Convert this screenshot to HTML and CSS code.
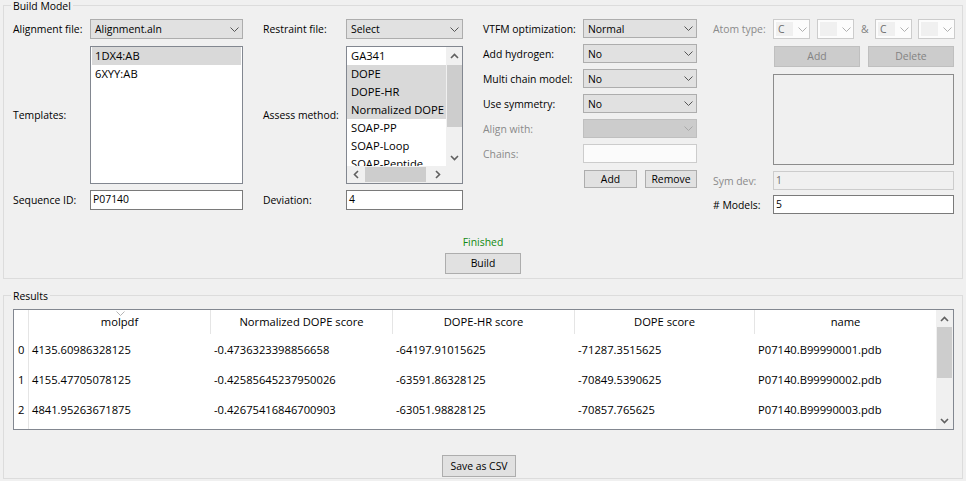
FILE: index.html
```html
<!DOCTYPE html>
<html>
<head>
<meta charset="utf-8">
<link rel="stylesheet" href="styles.css">
</head>
<body>
<div class="group build">
  <div class="gtitle">Build Model</div>
  <div class="cols">
    <div class="col c1">
      <div class="row">
        <span class="lbl">Alignment file:</span>
        <div class="combo field"><span class="ctext">Alignment.aln</span><svg class="chev" width="9" height="5" viewBox="0 0 9 5"><path d="M0.5 0.5 L4.5 4.5 L8.5 0.5"/></svg></div>
      </div>
      <div class="row mt7">
        <span class="lbl">Templates:</span>
        <div class="list tpl field">
          <div class="item sel">1DX4:AB</div>
          <div class="item">6XYY:AB</div>
        </div>
      </div>
      <div class="row mt6">
        <span class="lbl">Sequence ID:</span>
        <div class="input field">P07140</div>
      </div>
    </div>

    <div class="col c2">
      <div class="row">
        <span class="lbl">Restraint file:</span>
        <div class="combo field"><span class="ctext">Select</span><svg class="chev" width="9" height="5" viewBox="0 0 9 5"><path d="M0.5 0.5 L4.5 4.5 L8.5 0.5"/></svg></div>
      </div>
      <div class="row mt7">
        <span class="lbl">Assess method:</span>
        <div class="list assess field">
          <div class="items">
            <div class="item">GA341</div>
            <div class="item sel">DOPE</div>
            <div class="item sel">DOPE-HR</div>
            <div class="item sel">Normalized DOPE</div>
            <div class="item">SOAP-PP</div>
            <div class="item">SOAP-Loop</div>
            <div class="item">SOAP-Peptide</div>
          </div>
          <div class="vscroll">
            <div class="sbtn"><svg width="9" height="6" viewBox="0 0 9 6"><path d="M1 5 L4.5 1.5 L8 5"/></svg></div>
            <div class="vthumb athumb"></div>
            <div class="sfill"></div>
            <div class="sbtn"><svg width="9" height="6" viewBox="0 0 9 6"><path d="M1 1 L4.5 4.5 L8 1"/></svg></div>
          </div>
          <div class="hscroll">
            <div class="sbtn"><svg width="6" height="9" viewBox="0 0 6 9"><path d="M5 1 L1.5 4.5 L5 8"/></svg></div>
            <div class="hthumb"></div>
            <div class="sfill"></div>
            <div class="sbtn"><svg width="6" height="9" viewBox="0 0 6 9"><path d="M1 1 L4.5 4.5 L1 8"/></svg></div>
          </div>
          <div class="corner"></div>
        </div>
      </div>
      <div class="row mt6">
        <span class="lbl">Deviation:</span>
        <div class="input field">4</div>
      </div>
    </div>

    <div class="col c3">
      <div class="row r19">
        <span class="lbl">VTFM optimization:</span>
        <div class="combo field"><span class="ctext">Normal</span><svg class="chev" width="9" height="5" viewBox="0 0 9 5"><path d="M0.5 0.5 L4.5 4.5 L8.5 0.5"/></svg></div>
      </div>
      <div class="row r19 mt6">
        <span class="lbl">Add hydrogen:</span>
        <div class="combo field"><span class="ctext">No</span><svg class="chev" width="9" height="5" viewBox="0 0 9 5"><path d="M0.5 0.5 L4.5 4.5 L8.5 0.5"/></svg></div>
      </div>
      <div class="row r19 mt6">
        <span class="lbl">Multi chain model:</span>
        <div class="combo field"><span class="ctext">No</span><svg class="chev" width="9" height="5" viewBox="0 0 9 5"><path d="M0.5 0.5 L4.5 4.5 L8.5 0.5"/></svg></div>
      </div>
      <div class="row r19 mt6">
        <span class="lbl">Use symmetry:</span>
        <div class="combo field"><span class="ctext">No</span><svg class="chev" width="9" height="5" viewBox="0 0 9 5"><path d="M0.5 0.5 L4.5 4.5 L8.5 0.5"/></svg></div>
      </div>
      <div class="row r19 mt6">
        <span class="lbl dis">Align with:</span>
        <div class="combo combo-dis field"><span class="ctext"></span><svg class="chev" width="9" height="5" viewBox="0 0 9 5"><path d="M0.5 0.5 L4.5 4.5 L8.5 0.5"/></svg></div>
      </div>
      <div class="row r19 mt6">
        <span class="lbl dis">Chains:</span>
        <div class="input input-dis chains field"></div>
      </div>
      <div class="row mt7">
        <span class="lbl"></span>
        <div class="field btns3">
          <button class="btn b-add">Add</button>
          <button class="btn b-remove">Remove</button>
        </div>
      </div>
    </div>

    <div class="col c4">
      <div class="row">
        <span class="lbl dis">Atom type:</span>
        <div class="field atoms">
          <div class="acombo"><span class="abox">C</span><svg class="chev" width="9" height="5" viewBox="0 0 9 5"><path d="M0.5 0.5 L4.5 4.5 L8.5 0.5"/></svg></div>
          <div class="acombo"><span class="abox"></span><svg class="chev" width="9" height="5" viewBox="0 0 9 5"><path d="M0.5 0.5 L4.5 4.5 L8.5 0.5"/></svg></div>
          <span class="amp">&amp;</span>
          <div class="acombo"><span class="abox">C</span><svg class="chev" width="9" height="5" viewBox="0 0 9 5"><path d="M0.5 0.5 L4.5 4.5 L8.5 0.5"/></svg></div>
          <div class="acombo"><span class="abox"></span><svg class="chev" width="9" height="5" viewBox="0 0 9 5"><path d="M0.5 0.5 L4.5 4.5 L8.5 0.5"/></svg></div>
        </div>
      </div>
      <div class="row mt7">
        <span class="lbl"></span>
        <div class="field btns4">
          <button class="btn btn-dis b-add4">Add</button>
          <button class="btn btn-dis b-del4">Delete</button>
        </div>
      </div>
      <div class="row mt7">
        <span class="lbl"></span>
        <div class="field dbox"></div>
      </div>
      <div class="row mt6">
        <span class="lbl dis">Sym dev:</span>
        <div class="input input-dis symdev field r19">1</div>
      </div>
      <div class="row mt5">
        <span class="lbl">#&nbsp;Models:</span>
        <div class="input field r19 models">5</div>
      </div>
    </div>
  </div>
  <div class="status">Finished</div>
  <div class="btnrow"><button class="btn b-build">Build</button></div>
</div>

<div class="group results">
  <div class="gtitle">Results</div>
  <div class="table">
    <div class="tview">
      <div class="trow thead">
        <div class="vh"></div>
        <div class="th sorted">molpdf<svg class="sort" width="9" height="5" viewBox="0 0 9 5"><path d="M0.5 0.5 L4.5 4.5 L8.5 0.5"/></svg></div>
        <div class="th">Normalized DOPE score</div>
        <div class="th">DOPE-HR score</div>
        <div class="th">DOPE score</div>
        <div class="th">name</div>
      </div>
      <div class="trow">
        <div class="vh">0</div>
        <div class="td">4135.60986328125</div>
        <div class="td">-0.4736323398856658</div>
        <div class="td">-64197.91015625</div>
        <div class="td">-71287.3515625</div>
        <div class="td">P07140.B99990001.pdb</div>
      </div>
      <div class="trow">
        <div class="vh">1</div>
        <div class="td">4155.47705078125</div>
        <div class="td">-0.42585645237950026</div>
        <div class="td">-63591.86328125</div>
        <div class="td">-70849.5390625</div>
        <div class="td">P07140.B99990002.pdb</div>
      </div>
      <div class="trow">
        <div class="vh">2</div>
        <div class="td">4841.95263671875</div>
        <div class="td">-0.42675416846700903</div>
        <div class="td">-63051.98828125</div>
        <div class="td">-70857.765625</div>
        <div class="td">P07140.B99990003.pdb</div>
      </div>
    </div>
    <div class="vscroll tscroll">
      <div class="sbtn"><svg width="9" height="6" viewBox="0 0 9 6"><path d="M1 5 L4.5 1.5 L8 5"/></svg></div>
      <div class="vthumb tthumb"></div>
      <div class="sfill"></div>
      <div class="sbtn"><svg width="9" height="6" viewBox="0 0 9 6"><path d="M1 1 L4.5 4.5 L8 1"/></svg></div>
    </div>
  </div>
  <div class="saverow"><button class="btn b-save">Save as CSV</button></div>
</div>
</body>
</html>
```

FILE: styles.css
```css
* { box-sizing: border-box; }

body {
  margin: 0;
  width: 966px;
  height: 481px;
  overflow: hidden;
  background: #f0f0f0;
  font-family: "Open Sans", "Noto Sans", sans-serif;
  font-size: 10.4px;
  color: #000;
}

/* group boxes */
.group {
  border: 1px solid #dcdcdc;
  margin: 5px 3px 0 3px;
}
.gtitle {
  display: table;
  margin: -6px 0 0 7px;
  padding: 0 2px;
  line-height: 12px;
  background: #f0f0f0;
}
.build { padding-bottom: 4px; }
.results { margin-top: 16px; padding-bottom: 1px; }

/* columns */
.cols {
  display: flex;
  margin: 7px 0 0 9px;
}
.col { display: flex; flex-direction: column; }
.c1 { width: 230px; margin-right: 20px; }
.c2 { width: 200px; margin-right: 20px; }
.c3 { width: 214px; margin-right: 16px; }
.c4 { width: 241px; }
.c1 .lbl { width: 77px; }
.c2 .lbl { width: 83px; }
.c3 .lbl { width: 100px; }
.c4 .lbl { width: 60px; }

.row { display: flex; align-items: center; }
.mt5 { margin-top: 5px; }
.mt6 { margin-top: 6px; }
.mt7 { margin-top: 7px; }
.lbl { flex: none; white-space: nowrap; }
.lbl.dis { color: #8a8a8a; }
.field { flex: 1; min-width: 0; }

/* combo boxes */
.combo {
  display: flex;
  align-items: center;
  height: 20px;
  border: 1px solid #adadad;
  background: #e1e1e1;
  padding: 0 3px 0 4px;
}
.r19 .combo, .r19.input, .r19 .input { height: 19px; }
.ctext { flex: 1; line-height: 16px; white-space: nowrap; }
.chev { flex: none; display: block; }
.chev path { fill: none; stroke: #555; stroke-width: 1; }
.combo-dis { background: #cccccc; border-color: #bfbfbf; }
.combo-dis .chev path { stroke: #a8a8a8; }

/* inputs */
.input {
  height: 20px;
  border: 1px solid #7a7a7a;
  background: #fff;
  padding-left: 2px;
  line-height: 17px;
}
.input-dis { border-color: #cccccc; background: #f0f0f0; color: #6d6d6d; }
.chains { background: #fbfbfb; }
.models { line-height: 17px; }

/* lists */
.list {
  height: 138px;
  border: 1px solid #828790;
  background: #fff;
  font-size: 11.2px;
  overflow: hidden;
}
.item {
  height: 18px;
  line-height: 18px;
  white-space: nowrap;
  padding-left: 4px;
}
.item.sel { background: #d9d9d9; }
.tpl { padding: 0 1px; }
.tpl .item { padding-left: 3px; }

.assess {
  display: grid;
  grid-template-columns: 99px 17px;
  grid-template-rows: 119px 17px;
}
.items { overflow: hidden; }

/* scrollbars */
.vscroll {
  display: flex;
  flex-direction: column;
  background: #f0f0f0;
}
.hscroll {
  display: flex;
  background: #f0f0f0;
}
.corner { background: #f0f0f0; }
.sbtn {
  flex: none;
  width: 17px;
  height: 17px;
  display: flex;
  align-items: center;
  justify-content: center;
}
.sbtn path { fill: none; stroke: #606060; stroke-width: 1.6; }
.sfill { flex: 1; }
.vthumb { flex: none; background: #cdcdcd; margin: 0 1px; }
.athumb { margin-top: 1px; height: 62px; }
.hthumb { flex: none; background: #cdcdcd; margin: 1px 0 1px 1px; width: 61px; }

/* buttons */
.btn {
  font: inherit;
  color: #000;
  border: 1px solid #adadad;
  background: #e1e1e1;
  padding: 0;
  height: 21px;
  line-height: 17px;
}
.btn-dis { background: #cccccc; border-color: #bfbfbf; color: #838383; }
.btns3 { display: flex; gap: 8px; padding-left: 1px; }
.b-add { width: 53px; height: 18px; line-height: 14px; }
.b-remove { width: 52px; height: 18px; line-height: 14px; }
.btns4 { display: flex; gap: 8px; padding-left: 1px; }
.b-add4 { width: 86px; }
.b-del4 { width: 86px; }

/* atom type */
.atoms { display: flex; align-items: center; height: 20px; }
.acombo {
  width: 37px;
  height: 20px;
  flex: none;
  display: flex;
  align-items: center;
  border: 1px solid #cccccc;
  background: #fcfcfc;
  padding: 2px 3px 2px 2px;
  margin-right: 7px;
}
.acombo:nth-child(4) { margin-right: 6px; }
.acombo:last-child { margin-right: 0; }
.abox {
  flex: none;
  width: 17px;
  height: 14px;
  background: #f0f0f0;
  color: #6d6d6d;
  line-height: 14px;
  padding-left: 2px;
  margin-right: 5px;
}
.acombo .chev path { stroke: #b0b0b0; }
.amp { width: 7px; margin-right: 7px; color: #838383; flex: none; }

.dbox {
  height: 91px;
  border: 1px solid #8c8c8c;
  background: #f0f0f0;
}

.status {
  margin-top: 21px;
  text-align: center;
  line-height: 14px;
  color: #108a10;
}
.btnrow { display: flex; justify-content: center; margin-top: 4px; }
.b-build { width: 76px; }

/* table */
.table {
  display: flex;
  height: 121px;
  margin: 7px 8px 0 9px;
  border: 1px solid #828790;
  background: #fff;
  font-size: 11.2px;
}
.tview {
  width: 922px;
  background: linear-gradient(#e5e5e5, #e5e5e5) 14px 0 / 1px 100% no-repeat, #fff;
}
.trow {
  display: grid;
  grid-template-columns: 14px 182px 182px 182px 180px 182px;
  height: 30px;
  line-height: 30px;
  white-space: nowrap;
}
.thead { height: 25px; line-height: 24px; }
.th {
  position: relative;
  height: 24px;
  border-left: 1px solid #e5e5e5;
  text-align: center;
}
.sort {
  position: absolute;
  left: 87px;
  top: 1px;
}
.sort path { fill: none; stroke: #b5b5b5; stroke-width: 1; }
.vh { padding-left: 4px; }
.td { padding-left: 4px; overflow: hidden; }
.tscroll { width: 17px; flex: none; }
.tthumb { margin-top: 0; height: 51px; }

.saverow {
  display: flex;
  justify-content: center;
  margin-top: 25px;
  padding-right: 8px;
}
.b-save { width: 74px; height: 22px; line-height: 18px; }
```
